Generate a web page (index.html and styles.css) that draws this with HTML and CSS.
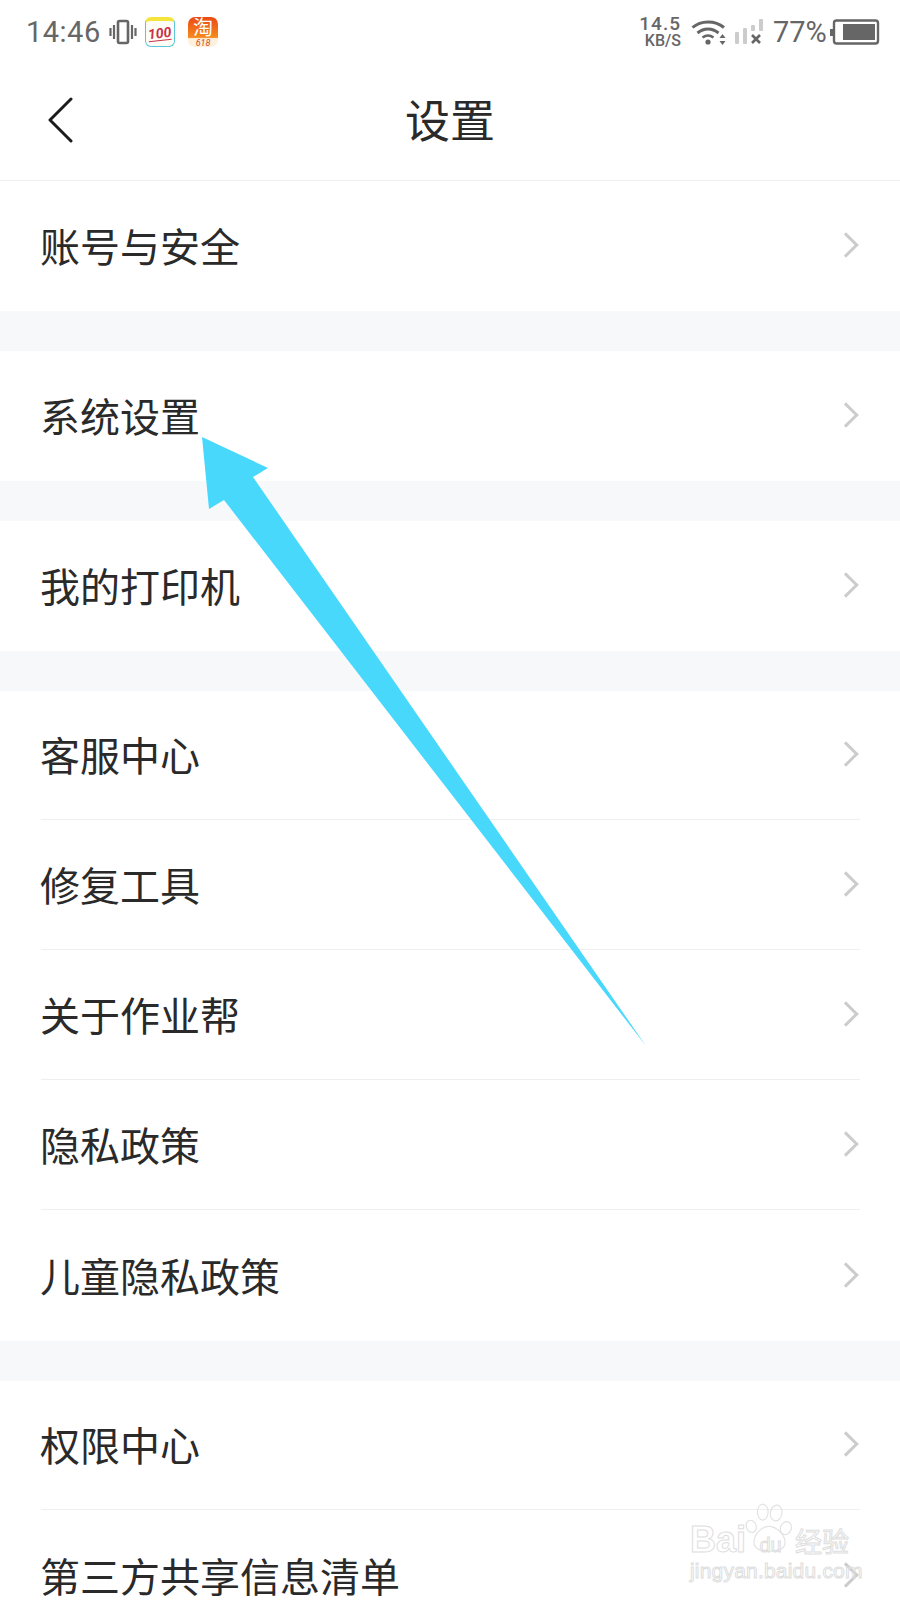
FILE: index.html
```html
<!DOCTYPE html>
<html lang="zh-CN">
<head>
    <meta charset="UTF-8">
    <meta name="viewport" content="width=device-width, initial-scale=1.0">
    <title>设置</title>
    <link rel="stylesheet" href="styles.css">
</head>
<body>
    <div class="status-bar">
        <div class="status-left">
            <span class="time">14:46</span>
            <svg class="ic-vibrate" width="28" height="26" viewBox="0 0 28 26">
                <rect x="9" y="2" width="10" height="22" rx="1.5" fill="none" stroke="#666" stroke-width="2.6"/>
                <path d="M5 6v14M1.500 9v8M23 6v14M26.500 9v8" stroke="#666" stroke-width="2.200" fill="none"/>
            </svg>
            <div class="app-100"><span class="num-100">100</span></div>
            <div class="app-tao"><span class="tao-char">淘</span><span class="tao-num">618</span></div>
        </div>
        <div class="status-right">
            <div class="speed"><span>14.5</span><span class="speed-unit">KB/S</span></div>
            <svg class="ic-wifi" width="37" height="26" viewBox="0 0 37 26">
                <path d="M1.500 8.500C10 1 24 1 33 8.500" fill="none" stroke="#666" stroke-width="3"/>
                <path d="M6.500 14C13 8.500 21 8.500 27.500 14" fill="none" stroke="#666" stroke-width="3"/>
                <path d="M11.500 18.500C15 16 19 16 22.500 18.500" fill="none" stroke="#666" stroke-width="2.600"/>
                <circle cx="17" cy="23" r="2.600" fill="#666"/>
                <path d="M31.500 15l3 4h-6zM31.500 26l3-4h-6z" fill="#666"/>
            </svg>
            <svg class="ic-signal" width="28" height="26" viewBox="0 0 28 26">
                <rect x="0" y="13" width="4" height="12" rx="1" fill="#ccc"/>
                <rect x="8" y="9" width="4" height="16" rx="1" fill="#ccc"/>
                <rect x="16" y="6" width="4" height="6" rx="1" fill="#ccc"/>
                <rect x="24" y="0" width="4" height="12" rx="1" fill="#ccc"/>
                <path d="M17 16l8 8M25 16l-8 8" stroke="#666" stroke-width="2.600"/>
            </svg>
            <span class="battery-pct">77%</span>
            <svg class="ic-battery" width="50" height="26" viewBox="0 0 50 26">
                <path d="M0 10h3v7H0z" fill="#666"/>
                <rect x="4" y="1.500" width="44" height="23" rx="2.500" fill="none" stroke="#666" stroke-width="2.400"/>
                <rect x="13" y="5" width="32" height="16" fill="#666"/>
            </svg>
        </div>
    </div>

    <div class="nav-bar">
        <svg class="nav-back" width="28" height="46" viewBox="0 0 28 46">
            <path d="M24 2L3 23l21 21" fill="none" stroke="#1c1c1c" stroke-width="3" stroke-linecap="round" stroke-linejoin="round"/>
        </svg>
        <h1>设置</h1>
    </div>

    <div class="group">
        <div class="row"><span>账号与安全</span><i class="chevron"></i></div>
    </div>
    <div class="group">
        <div class="row"><span>系统设置</span><i class="chevron"></i></div>
    </div>
    <div class="group">
        <div class="row"><span>我的打印机</span><i class="chevron"></i></div>
    </div>
    <div class="group">
        <div class="row"><span>客服中心</span><i class="chevron"></i></div>
        <div class="row"><span>修复工具</span><i class="chevron"></i></div>
        <div class="row"><span>关于作业帮</span><i class="chevron"></i></div>
        <div class="row"><span>隐私政策</span><i class="chevron"></i></div>
        <div class="row"><span>儿童隐私政策</span><i class="chevron"></i></div>
    </div>
    <div class="group">
        <div class="row"><span>权限中心</span><i class="chevron"></i></div>
        <div class="row"><span>第三方共享信息清单</span><i class="chevron"></i></div>
    </div>

    <!-- annotation arrow drawn over the screenshot -->
    <svg class="arrow" width="900" height="1600" viewBox="0 0 900 1600">
        <polygon points="202,437 268,468 253,477 646,1046 224,500 209,509" fill="#48d8fc"/>
    </svg>

    <div class="watermark">
        <svg class="paw" width="48" height="52" viewBox="0 0 54 58">
            <g fill="none" stroke="#e2e2e2" stroke-width="1.300">
                <ellipse cx="7" cy="26" rx="5.500" ry="7" transform="rotate(-20 7 26)"/>
                <ellipse cx="20" cy="10" rx="6" ry="9"/>
                <ellipse cx="35" cy="11" rx="6.500" ry="9" transform="rotate(10 35 11)"/>
                <ellipse cx="46" cy="28" rx="6" ry="7.500" transform="rotate(20 46 28)"/>
                <path d="M10 44c0-9 9-18 17-18s18 9 18 18c0 8-8 10-17 10S10 52 10 44z"/>
            </g>
        </svg>
        <div class="wm-top"><span class="wm-bai">Bai</span><span class="wm-du">du</span><span class="wm-jy">经验</span></div>
        <div class="wm-url">jingyan.baidu.com</div>
    </div>
</body>
</html>
```

FILE: styles.css
```css
html, body {
    margin: 0;
    height: 1600px;
    overflow: hidden;
}
body {
    position: relative;
    background-color: #ffffff;
    color: #2a2a2a;
    font-family: Roboto, "Noto Sans CJK SC", sans-serif;
}
.status-bar {
    height: 64px;
    display: flex;
    justify-content: space-between;
    align-items: center;
    padding: 0 20px 0 26px;
    color: #666666;
}
.status-left, .status-right {
    display: flex;
    align-items: center;
}
.time {
    font-size: 29px;
    width: 83px;
    letter-spacing: 0.5px;
}
.app-100 {
    width: 30px;
    height: 30px;
    margin-left: 8px;
    border: 1px solid #5cc6d8;
    border-top: 4px solid #f4e43c;
    border-radius: 6px;
    box-sizing: border-box;
    display: flex;
    align-items: center;
    justify-content: center;
    background-color: #fdfdf6;
}
.num-100 {
    color: #c8324a;
    font-size: 14px;
    line-height: 14px;
    font-weight: 700;
    font-style: italic;
    border-bottom: 1px solid #c8324a;
    transform: rotate(-6deg);
}
.app-tao {
    width: 30px;
    height: 30px;
    margin-left: 13px;
    border-radius: 7px;
    background: linear-gradient(#ea4a14, #f58a1e 68%, #fdf0dc 72%);
    display: flex;
    flex-direction: column;
    align-items: center;
    overflow: hidden;
    color: #ffffff;
}
.tao-char {
    font-size: 20px;
    line-height: 22px;
}
.tao-num {
    font-size: 9px;
    line-height: 9px;
    color: #d8481c;
    font-style: italic;
}
.speed {
    display: flex;
    flex-direction: column;
    align-items: flex-end;
    font-size: 19px;
    line-height: 18px;
    font-weight: 500;
    letter-spacing: 1px;
    margin-right: 10px;
}
.speed-unit {
    font-size: 16px;
    line-height: 16px;
    letter-spacing: 0;
}
.ic-signal {
    margin-left: 7px;
}
.battery-pct {
    font-size: 29px;
    margin-left: 10px;
    width: 57px;
}
.nav-bar {
    height: 108px;
    padding-bottom: 8px;
    border-bottom: 1px solid #efefef;
    display: flex;
    align-items: center;
    justify-content: center;
    position: relative;
}
.nav-bar h1 {
    margin: 0;
    font-size: 45px;
    font-weight: 400;
    color: #2a2a2a;
}
.nav-back {
    position: absolute;
    left: 47px;
    top: 33px;
}
.group {
    background-color: #ffffff;
    padding-left: 41px;
    padding-right: 40px;
    border-bottom: 40px solid #f7f8fa;
}
.row {
    height: 129px;
    margin-bottom: 1px;
    box-sizing: border-box;
    border-bottom: 1px solid #efefef;
    display: flex;
    align-items: center;
    justify-content: space-between;
    font-size: 40px;
    padding-bottom: 2px;
}
.row span {
    margin-left: -1px;
}
.row:last-child {
    border-bottom: none;
}
.chevron {
    width: 15px;
    height: 15px;
    margin-right: 5px;
    border-top: 3px solid #cccccc;
    border-right: 3px solid #cccccc;
    transform: rotate(45deg);
}
.arrow {
    position: absolute;
    left: 0;
    top: 0;
}
.watermark {
    position: absolute;
    left: 690px;
    top: 1503px;
    width: 170px;
    height: 90px;
}
.paw {
    position: absolute;
    left: 55px;
    top: 0;
}
.wm-top {
    position: absolute;
    left: 0;
    top: 16px;
    display: flex;
    align-items: baseline;
    color: transparent;
    -webkit-text-stroke: 1px #dedede;
    font-family: "Liberation Sans", "Noto Sans CJK SC", sans-serif;
}
.wm-bai {
    font-size: 36px;
    font-weight: 700;
    width: 56px;
}
.wm-du {
    font-size: 20px;
    width: 49px;
    text-align: center;
}
.wm-jy {
    font-size: 27px;
}
.wm-url {
    position: absolute;
    left: 0;
    top: 56px;
    font-family: "Liberation Sans", sans-serif;
    font-size: 21px;
    white-space: nowrap;
    color: transparent;
    -webkit-text-stroke: 1px #dedede;
    letter-spacing: 0.2px;
}
```
